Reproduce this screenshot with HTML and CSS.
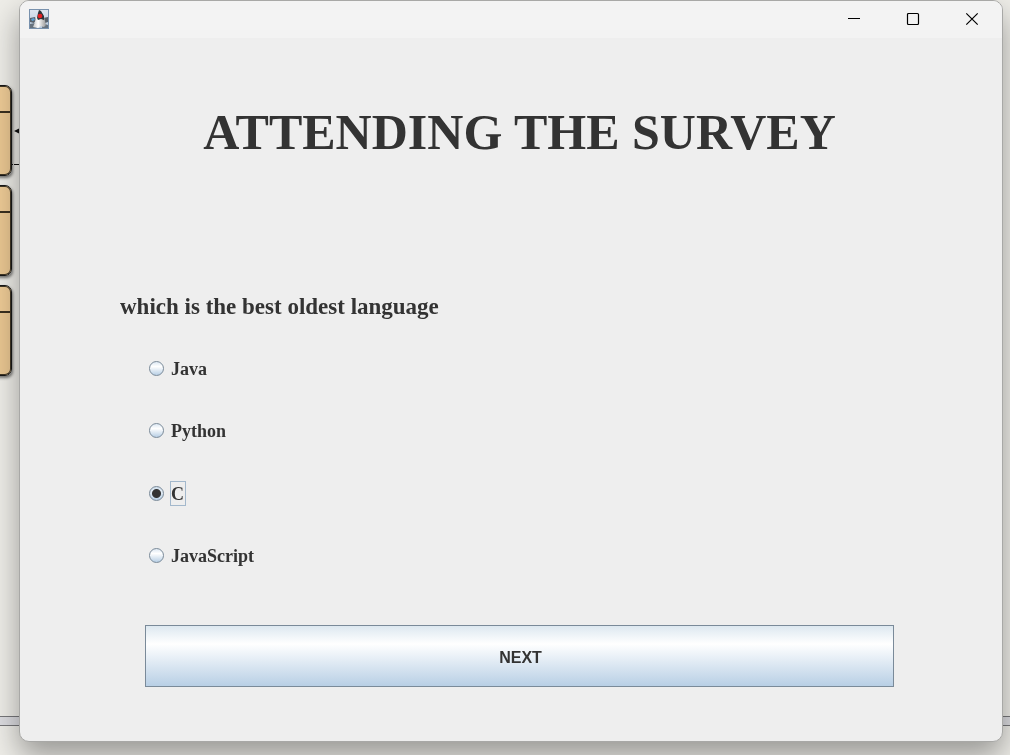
FILE: index.html
```html
<!DOCTYPE html>
<html lang="en">
<head>
<meta charset="utf-8">
<meta name="viewport" content="width=device-width, initial-scale=1">
<title>Survey</title>
<link rel="stylesheet" href="styles.css">
</head>
<body>
<div class="backdrop" aria-hidden="true">
  <div class="node node-first"></div>
  <div class="node node-second"></div>
  <div class="node node-third"></div>
  <svg class="link" width="8" height="44" viewBox="0 0 8 44"><path d="M2 6l6-3v6z" fill="#111"/><path d="M0 39.500h1M2 39.500h6" stroke="#111"/></svg>
  <div class="rail"></div>
</div>
<div class="window">
  <header class="titlebar">
    <svg class="app-icon" width="20" height="20" viewBox="0 0 20 20" aria-hidden="true">
      <defs>
        <linearGradient id="sky" x1="0" y1="0" x2="0" y2="1"><stop offset="0" stop-color="#dfe6f0"/><stop offset="1" stop-color="#b7c8dc"/></linearGradient>
        <linearGradient id="belly" x1="0" y1="0" x2="1" y2="0"><stop offset="0" stop-color="#c4c4c4"/><stop offset=".4" stop-color="#fff"/><stop offset="1" stop-color="#999"/></linearGradient>
      </defs>
      <rect x=".5" y=".5" width="19" height="19" fill="url(#sky)" stroke="#7891ad"/>
      <path d="M1 9l5-1 1 3-2 3-4-1zM14 9l5-1v5l-3 1-2-2z" fill="#59626b"/>
      <path d="M2 10l3-1 1 2-3 1z" fill="#5ea1d3"/>
      <path d="M1 15l5-1 2 5H1zM14 14l2 1 3 1v3h-6z" fill="#66727e"/>
      <path d="M7 8h8l2 8-2 2-3-1-3 2-5-1 2-5z" fill="url(#belly)"/>
      <path d="M10 1l2 1 3 5v4l-3-1-3 1-1-2 1-5z" fill="#30343a"/>
      <circle cx="11" cy="7" r="2.300" fill="#e51f22"/>
    </svg>
    <div class="controls">
      <button class="control" type="button" aria-label="Minimize"><svg width="14" height="14" viewBox="0 0 14 14"><path d="M1 6.500h12" stroke="#000"/></svg></button>
      <button class="control" type="button" aria-label="Maximize"><svg width="14" height="14" viewBox="0 0 14 14"><rect x="1.500" y="1.500" width="11" height="11" rx="1" fill="none" stroke="#000" stroke-width="1.200"/></svg></button>
      <button class="control" type="button" aria-label="Close"><svg width="14" height="14" viewBox="0 0 14 14"><path d="M1.300 1.300l11.400 11.400M12.700 1.300L1.300 12.700" stroke="#000" stroke-width="1.200"/></svg></button>
    </div>
  </header>
  <main class="survey">
    <h1 class="heading">ATTENDING THE SURVEY</h1>
    <form class="form">
      <fieldset class="question">
        <legend class="prompt">which is the best oldest language</legend>
        <div class="options">
          <label class="option"><input class="radio" type="radio" name="language"><span class="label">Java</span></label>
          <label class="option"><input class="radio" type="radio" name="language"><span class="label">Python</span></label>
          <label class="option"><input class="radio" type="radio" name="language" checked><span class="label">C</span></label>
          <label class="option"><input class="radio" type="radio" name="language"><span class="label">JavaScript</span></label>
        </div>
      </fieldset>
      <button class="next" type="button">NEXT</button>
    </form>
  </main>
</div>
</body>
</html>
```
FILE: styles.css
```css
* {
  box-sizing: border-box;
}

body {
  margin: 0;
  min-height: 100vh;
  display: flex;
  padding: 0 7px 13px 19px;
  background: #eeede8;
  color: #333;
  font-family: "Liberation Serif", "Times New Roman", serif;
  overflow: hidden;
}

.backdrop {
  position: fixed;
  inset: 0;
}

.node {
  position: absolute;
  left: -80px;
  width: 92px;
  height: 91px;
  border: 1px solid #181818;
  border-radius: 7px;
  background: linear-gradient(#edca95 25px, #3a3020 25px, #3a3020 27px, #e9c691 27px);
  box-shadow: inset 0 0 0 1px #403624, 1px 2px 3px rgba(0, 0, 0, 0.5);
}

.node-first {
  top: 85px;
}

.node-second {
  top: 185px;
}

.node-third {
  top: 285px;
}

.link {
  position: absolute;
  left: 12px;
  top: 125px;
}

.rail {
  position: absolute;
  left: 0;
  right: 0;
  bottom: 29px;
  height: 10px;
  border: solid #77777a;
  border-width: 1px 0;
  background: #dcdce0;
}

.window {
  position: relative;
  flex: 1;
  display: flex;
  flex-direction: column;
  border: 1px solid #a8a8a6;
  border-radius: 10px;
  background: #eee;
  box-shadow: 0 14px 30px rgba(0, 0, 0, 0.36);
  overflow: hidden;
}

.titlebar {
  display: flex;
  align-items: center;
  justify-content: space-between;
  height: 37px;
  padding: 0 1px 2px 9px;
  background: #f3f3f3;
}

.controls {
  display: flex;
  align-self: stretch;
}

.control {
  display: grid;
  place-items: center;
  width: 59px;
  padding: 0;
  border: 0;
  background: none;
}

.survey {
  padding: 64px 83px 54px 100px;
}

.heading {
  margin: 0;
  font-size: 50px;
  line-height: 60px;
  text-align: center;
}

.form {
  display: flex;
  flex-direction: column;
  margin-top: 132px;
}

.question {
  min-width: 0;
  margin: 0;
  padding: 0;
  border: 0;
}

.prompt {
  padding: 0;
  font-size: 23px;
  font-weight: bold;
  line-height: 26px;
}

.options {
  display: grid;
  grid-template-rows: repeat(4, 1fr);
  height: 250px;
  margin-top: 17px;
  padding-left: 29px;
}

.option {
  display: flex;
  align-items: center;
  justify-self: start;
  gap: 6px;
  font-size: 18px;
  font-weight: bold;
  line-height: 21px;
}

.radio {
  appearance: none;
  width: 15px;
  height: 15px;
  margin: 0;
  border: 1px solid #7a8a99;
  border-radius: 50%;
  background: linear-gradient(#dde8f3, #fff 35%, #b8cfe5);
}

.radio:checked {
  background: radial-gradient(circle, #333 4px, transparent 5px), linear-gradient(#cfdeec, #e4edf5 35%, #b8cfe5);
}

.label {
  padding: 2px 1px 0 0;
  border: 1px solid transparent;
}

.radio:checked + .label {
  border-color: #a3b8cc;
}

.next {
  height: 62px;
  margin: 38px 25px 0;
  padding: 4px 0 0 2px;
  border: 1px solid #7a8a99;
  background: linear-gradient(#dde8f0, #fff 30%, #b8cfe5);
  color: #333;
  font: bold 16px "Liberation Sans", Arial, sans-serif;
}
```
